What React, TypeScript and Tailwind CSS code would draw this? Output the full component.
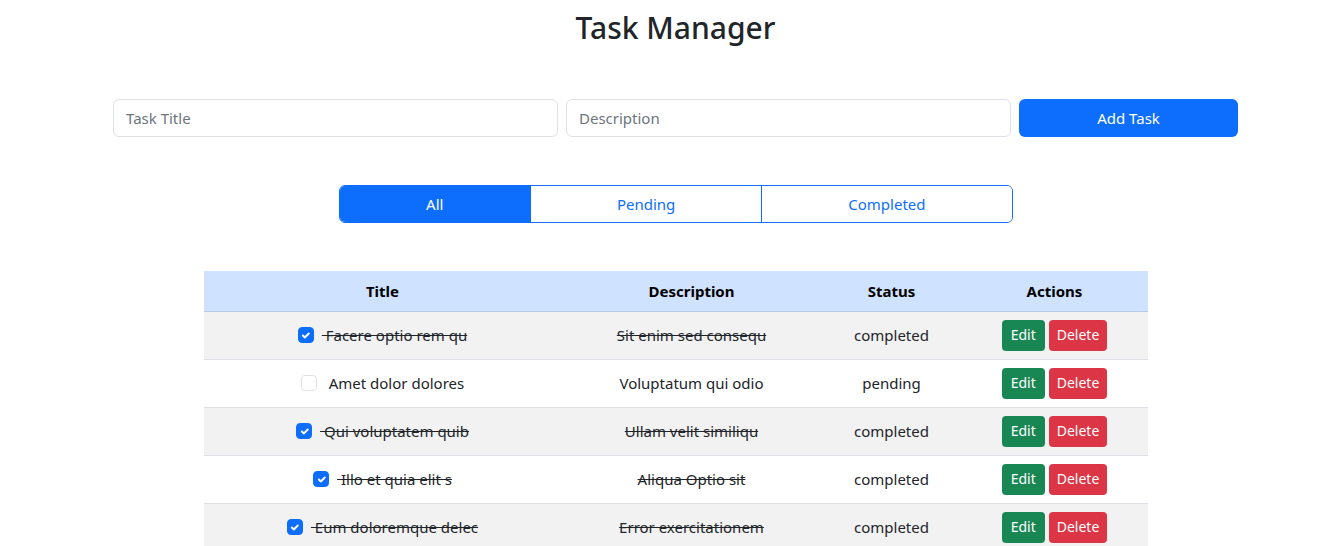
import React, { useState } from "react";

type Task = { id: number; title: string; description: string; completed: boolean };

const initialTasks: Task[] = [
  { id: 1, title: "Facere optio rem qu", description: "Sit enim sed consequ", completed: true },
  { id: 2, title: "Amet dolor dolores", description: "Voluptatum qui odio", completed: false },
  { id: 3, title: "Qui voluptatem quib", description: "Ullam velit similiqu", completed: true },
  { id: 4, title: "Illo et quia elit s", description: "Aliqua Optio sit", completed: true },
  { id: 5, title: "Eum doloremque delec", description: "Error exercitationem", completed: true },
];

const Checkbox = ({ checked, onChange }: { checked: boolean; onChange: () => void }) => (
  <button
    onClick={onChange}
    className={
      checked
        ? "w-4 h-4 mr-2 rounded-[4px] bg-[#0d6efd] border border-[#0d6efd] flex items-center justify-center shrink-0"
        : "w-4 h-4 mr-2 rounded-[4px] bg-white border border-[#dee2e6] shrink-0"
    }
  >
    {checked && (
      <svg viewBox="0 0 20 20" className="w-[13px] h-[13px]">
        <path d="M6 10l3 3 6-6" fill="none" stroke="#fff" strokeWidth={3} strokeLinecap="round" strokeLinejoin="round" />
      </svg>
    )}
  </button>
);

export default function App() {
  const [tasks, setTasks] = useState(initialTasks);
  const [filter, setFilter] = useState("All");

  const toggle = (id: number) =>
    setTasks(tasks.map(t => (t.id === id ? { ...t, completed: !t.completed } : t)));

  const shown = tasks.filter(t =>
    filter === "All" ? true : filter === "Pending" ? !t.completed : t.completed
  );

  const filters = [
    { name: "All", w: "w-[191px]" },
    { name: "Pending", w: "w-[232px]" },
    { name: "Completed", w: "w-[251px]" },
  ];

  return (
    <div className="min-h-screen bg-white pl-[14px] pt-[9px] text-[#212529] font-['Noto_Sans',sans-serif]">
      <h1 className="text-center text-[30px] font-medium leading-[38px]">Task Manager</h1>

      {/* Add form */}
      <div className="w-[1125px] mx-auto mt-[52px] flex gap-2">
        <input
          placeholder="Task Title"
          className="w-[445px] h-[38px] px-3 rounded-[6px] border border-[#dee2e6] text-[15px] placeholder:text-[#6c757d] outline-none"
        />
        <input
          placeholder="Description"
          className="w-[445px] h-[38px] px-3 rounded-[6px] border border-[#dee2e6] text-[15px] placeholder:text-[#6c757d] outline-none"
        />
        <button className="w-[219px] h-[38px] rounded-[6px] bg-[#0d6efd] text-white text-[15px]">Add Task</button>
      </div>

      {/* Filters */}
      <div className="w-[674px] mx-auto mt-[48px] flex h-[38px] rounded-[6px] border border-[#0d6efd] overflow-hidden">
        {filters.map((f, i) => (
          <button
            key={f.name}
            onClick={() => setFilter(f.name)}
            className={
              (filter === f.name ? "bg-[#0d6efd] text-white " : "bg-white text-[#0d6efd] ") +
              (i > 0 ? "border-l border-[#0d6efd] " : "") +
              f.w +
              " text-[15px]"
            }
          >
            {f.name}
          </button>
        ))}
      </div>

      {/* Table */}
      <table className="w-[944px] mx-auto mt-[48px] table-fixed border-collapse text-[15px]">
        <colgroup>
          <col className="w-[358px]" />
          <col className="w-[260px]" />
          <col className="w-[140px]" />
          <col className="w-[186px]" />
        </colgroup>
        <thead>
          <tr className="bg-[#cfe2ff] border-b border-[#bacbe6] h-[40px]">
            <th className="font-bold text-black">Title</th>
            <th className="font-bold text-black">Description</th>
            <th className="font-bold text-black">Status</th>
            <th className="font-bold text-black">Actions</th>
          </tr>
        </thead>
        <tbody>
          {shown.map((t, i) => (
            <tr key={t.id} className={(i % 2 === 0 ? "bg-[#f2f2f2] " : "bg-white ") + "border-b border-[#dee2e6] h-[48px]"}>
              <td className="px-2">
                <div className="flex items-center justify-center">
                  <Checkbox checked={t.completed} onChange={() => toggle(t.id)} />
                  <span className={t.completed ? "line-through whitespace-pre" : "whitespace-pre"}>{" " + t.title}</span>
                </div>
              </td>
              <td className={"text-center px-2 " + (t.completed ? "line-through" : "")}>{t.description}</td>
              <td className="text-center px-2">{t.completed ? "completed" : "pending"}</td>
              <td className="px-2">
                <div className="flex justify-center gap-1">
                  <button className="h-[31px] px-[9px] rounded-[4px] bg-[#198754] text-white text-sm">Edit</button>
                  <button className="h-[31px] px-2 rounded-[4px] bg-[#dc3545] text-white text-sm">Delete</button>
                </div>
              </td>
            </tr>
          ))}
        </tbody>
      </table>
    </div>
  );
}
